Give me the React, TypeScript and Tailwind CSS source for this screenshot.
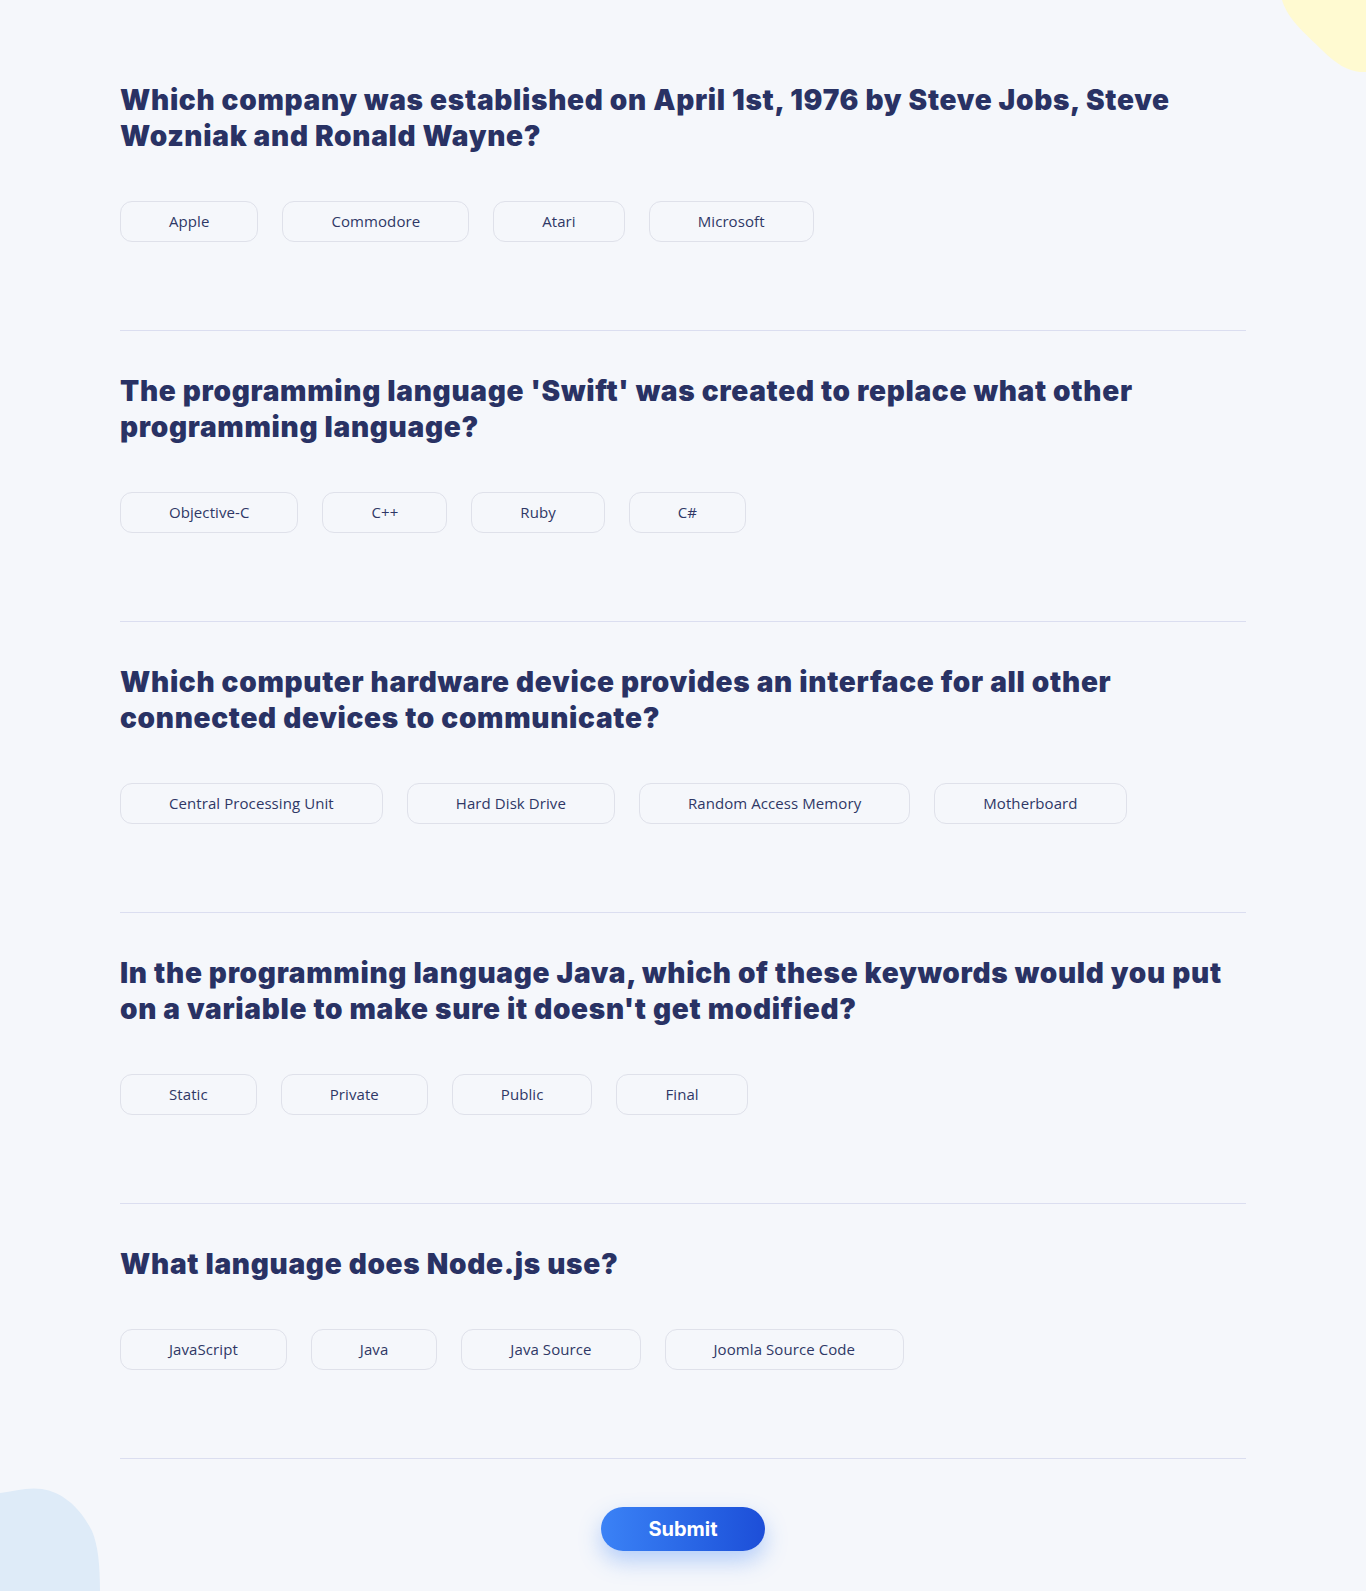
import React from "react";

const questions = [
  {
    q: "Which company was established on April 1st, 1976 by Steve Jobs, Steve Wozniak and Ronald Wayne?",
    answers: ["Apple", "Commodore", "Atari", "Microsoft"],
  },
  {
    q: "The programming language 'Swift' was created to replace what other programming language?",
    answers: ["Objective-C", "C++", "Ruby", "C#"],
  },
  {
    q: "Which computer hardware device provides an interface for all other connected devices to communicate?",
    answers: ["Central Processing Unit", "Hard Disk Drive", "Random Access Memory", "Motherboard"],
  },
  {
    q: "In the programming language Java, which of these keywords would you put on a variable to make sure it doesn't get modified?",
    answers: ["Static", "Private", "Public", "Final"],
  },
  {
    q: "What language does Node.js use?",
    answers: ["JavaScript", "Java", "Java Source", "Joomla Source Code"],
  },
];

const App = () => {
  return (
    <div className="relative min-h-[1591px] overflow-hidden bg-[#f5f7fb] text-[#293264]">
      {/* decorative blobs */}
      <svg className="absolute top-0 right-0 pointer-events-none" width="84" height="75" viewBox="0 0 84 75">
        <path d="M0 0 C6 20 24 34 40 50 C54 64 66 71 78 72 L84 72 L84 0 Z" fill="#fffad1" />
      </svg>
      <svg className="absolute bottom-0 left-0 pointer-events-none" width="104" height="104" viewBox="0 0 104 104">
        <path d="M0 6 C14 4 28 0 42 2 C62 5 80 20 92 44 C98 58 100 78 100 104 L0 104 Z" fill="#deebf8" />
      </svg>

      <div className="relative mx-auto w-[1126px] pt-[82px] pb-10" style={{ fontFamily: "Inter, 'Noto Sans', sans-serif" }}>
        {questions.map((item) => (
          <div key={item.q} className="border-b border-[#dbdef0] pb-[88px] mb-[42px]">
            <h2 className="text-[28px] leading-9 font-black tracking-[0.7px] text-[#293264]">{item.q}</h2>
            <div className="mt-[47px] flex gap-6">
              {item.answers.map((a) => (
                <button
                  key={a}
                  className="h-[41px] px-12 rounded-xl border border-[#dfe1ea] text-[15px] tracking-[0.08px] text-[#2f3766] bg-transparent"
                  style={{ fontFamily: "'Open Sans', sans-serif" }}
                >
                  {a}
                </button>
              ))}
            </div>
          </div>
        ))}
        <div className="flex justify-center pt-[6px]">
          <button className="w-[164px] h-11 rounded-full bg-gradient-to-r from-[#3b82f6] to-[#1d4ed8] text-white text-[20px] font-bold shadow-[0_10px_22px_rgba(59,130,246,0.35)]">
            Submit
          </button>
        </div>
      </div>
    </div>
  );
};

export default App;
